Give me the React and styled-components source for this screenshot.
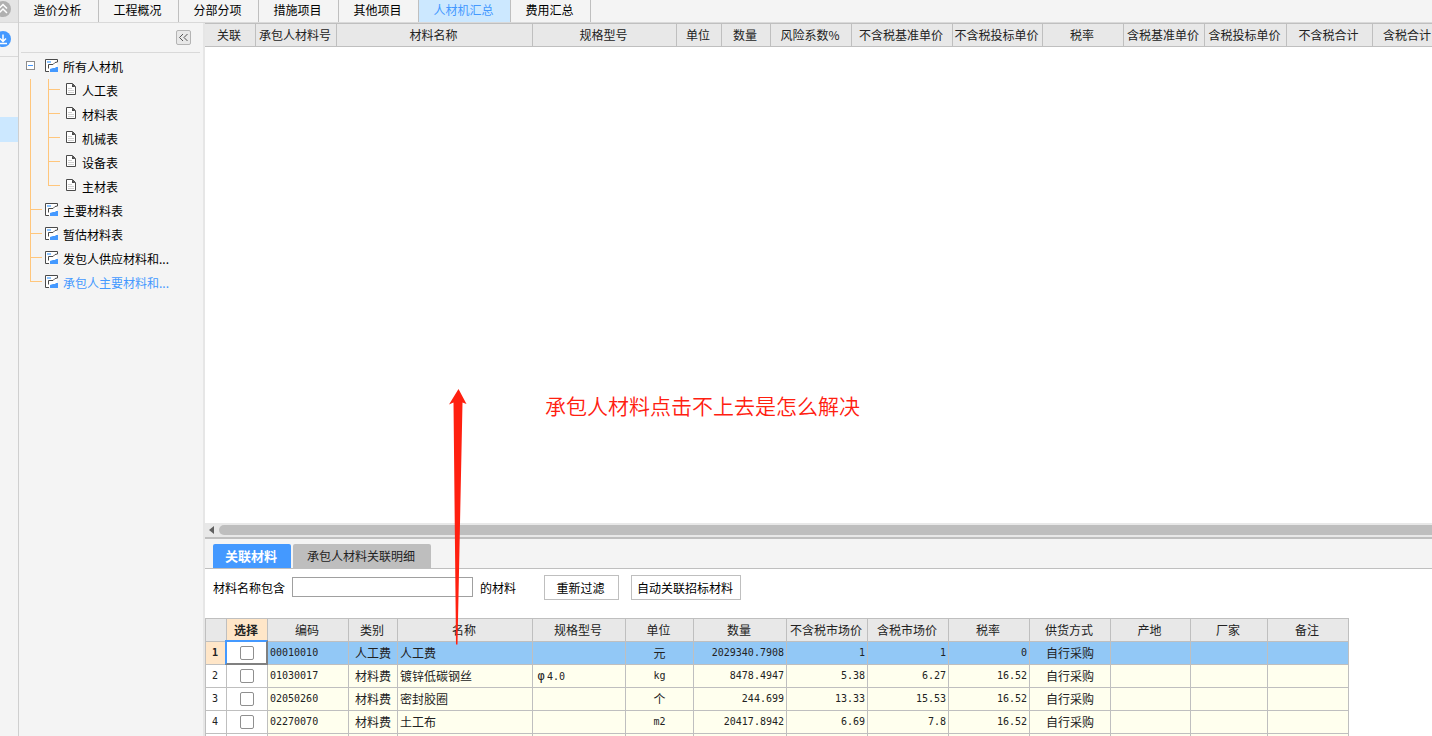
import React from 'react';
import styled, { createGlobalStyle } from 'styled-components';

const line = '#bfbfbf';
const softLine = '#d9d9d9';
const blue = '#4499ff';
const guide = '#ffc67c';

const GlobalStyle = createGlobalStyle`
  * { box-sizing: border-box; }
  body { margin: 0; background: #f4f4f4; color: #000; }
  body, button, input, table {
    font-family: "Noto Sans CJK SC", "Noto Sans", sans-serif;
    font-size: 12px;
    line-height: 16px;
  }
  button { padding: 0; margin: 0; border: 0; background: none; color: inherit; cursor: pointer; }
`;

const Page = styled.div`
  display: flex;
  height: 100vh;
  overflow: hidden;
`;

/* Left rail */
const Rail = styled.nav`
  flex: 0 0 19px;
  display: flex;
  flex-direction: column;
  border-right: 1px solid #cfcfcf;
  overflow: hidden;
`;
const RailButton = styled.button`
  display: flex;
  align-items: ${p => (p.$top ? 'flex-start' : 'center')};
  height: ${p => (p.$top ? 23 : 34)}px;
  background: ${p => (p.$top ? '#e4e4e4' : 'transparent')};
  border-bottom: 1px solid ${softLine};
  svg { display: block; flex: none; }
`;
const RailItem = styled.button`
  height: 25px;
  margin-top: 60px;
  background: #cce8ff;
`;

const Main = styled.div`
  flex: 1;
  min-width: 0;
  display: flex;
  flex-direction: column;
`;
const TopTabs = styled.nav`
  display: flex;
  flex: none;
  height: 23px;
  border-bottom: 1px solid ${softLine};
`;
const TopTab = styled.button`
  width: ${p => (p.$active ? 92 : 80)}px;
  padding: 0 2px 2px 0;
  border-right: 1px solid ${line};
  background: ${p => (p.$active ? '#cce8ff' : 'transparent')};
  color: ${p => (p.$active ? blue : '#000')};
`;
const Body = styled.div`
  flex: 1;
  min-height: 0;
  display: flex;
`;

/* Material tree */
const Sidebar = styled.aside`
  flex: 0 0 186px;
  border-right: 2px solid #e6e6e6;
`;
const SidebarHead = styled.div`
  display: flex;
  justify-content: flex-end;
  align-items: center;
  height: 30px;
  margin: 0 3px 2px 2px;
  padding-right: 9px;
  border-bottom: 1px solid ${softLine};
`;
const CollapseButton = styled.button`
  width: 15px;
  height: 15px;
  border: 1px solid #b4b4b4;
  border-radius: 2px;
  background: #e8e8e8;
  svg { display: block; }
`;
const Tree = styled.ul`
  list-style: none;
  margin: 0;
  padding: 0 0 0 11px;
`;
const TreeRow = styled.li`
  display: flex;
  align-items: center;
  height: 24px;
`;
const Guide = styled.span`
  flex: none;
  align-self: stretch;
  width: ${p => p.$width}px;
  background-image: linear-gradient(${guide}, ${guide}), linear-gradient(${guide}, ${guide});
  background-repeat: no-repeat;
  background-position: 0 0, 0 10px;
  background-size: 1px ${p => (p.$last ? '11px' : '100%')}, ${p => (p.$branch ? '12px' : '0')} 1px;
`;
const Toggle = styled.button`
  display: flex;
  align-items: center;
  justify-content: center;
  width: 9px;
  height: 9px;
  margin: 0 10px 3px -4px;
  border: 1px solid #8c8c8c;
  background: #fff;
  &::before { content: ''; width: 5px; height: 1px; background: ${blue}; }
`;
const TreeLink = styled.a`
  display: flex;
  align-items: center;
  gap: ${p => (p.$leaf ? 6 : 5)}px;
  color: ${p => (p.$active ? blue : '#000')};
  text-decoration: none;
  white-space: nowrap;
  svg { display: block; flex: none; margin-bottom: ${p => (p.$leaf ? 4 : 3)}px; }
`;

/* Right side */
const Workspace = styled.main`
  position: relative;
  flex: 1;
  min-width: 0;
  display: flex;
  flex-direction: column;
  overflow: hidden;
  background: #fff;
`;
const GridPane = styled.section`
  flex: 1;
  min-height: 0;
  overflow: hidden;
`;
const Table = styled.table`
  table-layout: fixed;
  width: 0;
  border-collapse: separate;
  border-spacing: 0;
  border-top: 1px solid ${line};
  border-left: ${p => (p.$leftEdge ? 1 : 0)}px solid ${line};
`;
const HeadCell = styled.th`
  height: 23px;
  padding: 0 2px 0 0;
  border-right: 1px solid ${line};
  border-bottom: 1px solid ${line};
  background: ${p => (p.$active ? '#ffe6c8' : '#e8e8e8')};
  color: #222;
  font-weight: ${p => (p.$active ? 700 : 400)};
  text-align: center;
  white-space: nowrap;
`;
const Cell = styled.td`
  height: 23px;
  padding: 0 2px;
  border-right: 1px solid ${line};
  border-bottom: 1px solid ${line};
  background: ${p => (p.$selected ? '#92c8f6' : '#ffffee')};
  color: #222;
  text-align: ${p => p.$align || 'left'};
  white-space: nowrap;
  font-family: ${p => (p.$mono ? '"DejaVu Sans Mono", "Noto Sans CJK SC", monospace' : 'inherit')};
  font-size: ${p => (p.$mono ? 10 : 12)}px;
`;
const Symbol = styled.span`
  display: inline-block;
  width: 12px;
  font-size: 12px;
  text-align: center;
`;
const RowHead = styled.th`
  padding: 0 2px 0 0;
  border-right: 1px solid ${line};
  border-bottom: 1px solid ${line};
  background: ${p => (p.$selected ? '#ffe6c8' : '#fff')};
  color: #222;
  font: ${p => (p.$selected ? 700 : 400)} 10px/16px "DejaVu Sans Mono", monospace;
`;
const CheckCell = styled.td`
  position: relative;
  padding: 0;
  border-right: 1px solid ${line};
  border-bottom: 1px solid ${line};
  background: #fff;
  &::after {
    content: '';
    display: ${p => (p.$selected ? 'block' : 'none')};
    position: absolute;
    inset: -2px -1px -1px -2px;
    border: 2px solid;
    border-color: ${blue} #808080 #808080 ${blue};
    pointer-events: none;
  }
`;
const Check = styled.input`
  appearance: none;
  display: block;
  width: 14px;
  height: 14px;
  margin: 0 auto;
  border: 1px solid #8f8f8f;
  border-radius: 2px;
  background: #fff;
  &:checked { background: ${blue}; }
`;
const ScrollTrack = styled.div`
  flex: none;
  display: flex;
  align-items: center;
  gap: 5px;
  height: 16px;
  padding-left: 4px;
  border-bottom: 2px solid ${line};
  background: #e8e8e8;
`;
const ScrollArrow = styled.button`
  width: 5px;
  svg { display: block; }
`;
const ScrollThumb = styled.div`
  flex: 1;
  height: 10px;
  border-radius: 5px 0 0 5px;
  background: #bebebe;
`;
const LinkPane = styled.section`
  flex: 0 0 197px;
  overflow: hidden;
`;
const PaneTabs = styled.div`
  display: flex;
  align-items: flex-end;
  gap: 2px;
  height: 30px;
  padding-left: 8px;
  border-bottom: 1px solid ${line};
  background: #f4f4f4;
`;
const PaneTab = styled.button`
  height: 24px;
  padding: ${p => (p.$active ? '0 14px 0 12px' : '0 16px 0 14px')};
  border-radius: 2px 2px 0 0;
  background: ${p => (p.$active ? blue : '#bebebe')};
  color: ${p => (p.$active ? '#fff' : '#222')};
  font-size: ${p => (p.$active ? 13 : 12)}px;
  font-weight: ${p => (p.$active ? 700 : 400)};
`;
const FilterBar = styled.form`
  display: flex;
  align-items: center;
  height: 25px;
  margin: 6px 0 18px;
  padding-left: 8px;
  white-space: nowrap;
`;
const FilterLabel = styled.label`
  display: flex;
  align-items: center;
  gap: 7px;
  margin-right: 28px;
`;
const FilterInput = styled.input`
  width: 181px;
  height: 20px;
  margin-bottom: 2px;
  border: 1px solid #a0a0a0;
  background: #fff;
`;
const FilterButton = styled.button`
  width: ${p => (p.$wide ? 110 : 75)}px;
  height: 25px;
  margin-right: 12px;
  padding: 0 2px 0 0;
  border: 1px solid ${line};
  background: #fff;
`;

/* Marks drawn over the window */
const Arrow = styled.svg`
  position: absolute;
  left: 243px;
  bottom: 91px;
  pointer-events: none;
`;
const Note = styled.p`
  position: absolute;
  left: 340px;
  bottom: 316px;
  margin: 0;
  color: #ff2010;
  font-size: 21px;
  line-height: 30px;
  font-weight: 350;
  white-space: nowrap;
`;

const ReportIcon = () => (
  <svg width="13" height="13" viewBox="0 0 13 13" aria-hidden="true">
    <rect x="1" y="1" width="11" height="11" fill="#fff" />
    <rect x="2" y="2" width="4" height="2" fill="#8cc4ff" />
    <path d="M5 13V10L8 9H10L11 8H13V13Z" fill={blue} />
    <path d="M4 12.500H0.500V0.500H12.500V3L10 3.500L8 5.500H3.500V9.500" fill="none" stroke="#4a4a4a" />
  </svg>
);
const PageIcon = () => (
  <svg width="10" height="12" viewBox="0 0 10 12" aria-hidden="true">
    <path d="M0.500 0.500H6.500L9.500 3.500V11.500H0.500Z" fill="#fff" stroke="#4a4a4a" />
    <path d="M6 0.500V4H9.500Z" fill="#4a4a4a" />
    <path d="M2 5.500H6M2 7.500H8M2 9.500H8" stroke="#d0d0d0" />
  </svg>
);

const topTabs = ['造价分析', '工程概况', '分部分项', '措施项目', '其他项目', '人材机汇总', '费用汇总'];
const leaves = ['人工表', '材料表', '机械表', '设备表', '主材表'];
const branches = ['主要材料表', '暂估材料表', '发包人供应材料和...', '承包人主要材料和...'];
const upperColumns = [
  ['关联', 51], ['承包人材料号', 81], ['材料名称', 196], ['规格型号', 144], ['单位', 45], ['数量', 49],
  ['风险系数%', 81], ['不含税基准单价', 101], ['不含税投标单价', 90], ['税率', 81], ['含税基准单价', 81],
  ['含税投标单价', 82], ['不含税合计', 86], ['含税合计', 71],
];
const lowerColumns = [
  ['', 21], ['选择', 41], ['编码', 81], ['类别', 49], ['名称', 135], ['规格型号', 93], ['单位', 68], ['数量', 93],
  ['不含税市场价', 81], ['含税市场价', 81], ['税率', 81], ['供货方式', 81], ['产地', 80], ['厂家', 77], ['备注', 81],
];
const aligns = ['left', 'center', 'left', 'left', 'center', 'right', 'right', 'right', 'right', 'center', 'left', 'left', 'left'];
const rows = [
  ['00010010', '人工费', '人工费', '', '元', '2029340.7908', '1', '1', '0', '自行采购', '', '', ''],
  ['01030017', '材料费', '镀锌低碳钢丝', 'φ4.0', 'kg', '8478.4947', '5.38', '6.27', '16.52', '自行采购', '', '', ''],
  ['02050260', '材料费', '密封胶圈', '', '个', '244.699', '13.33', '15.53', '16.52', '自行采购', '', '', ''],
  ['02270070', '材料费', '土工布', '', 'm2', '20417.8942', '6.69', '7.8', '16.52', '自行采购', '', '', ''],
  ['', '', '', '', '', '', '', '', '', '', '', '', ''],
];
const isLatin = text => /^[\x20-\x7eφ]+$/.test(text);

function Columns({ items }) {
  return (
    <colgroup>
      {items.map(([name, width]) => <col key={name} width={width} />)}
    </colgroup>
  );
}

function MaterialTree() {
  return (
    <Tree>
      <TreeRow>
        <Toggle aria-label="折叠" />
        <TreeLink href="#all"><ReportIcon />所有人材机</TreeLink>
      </TreeRow>
      {leaves.map((name, i) => (
        <TreeRow key={name}>
          <Guide $width={18} />
          <Guide $width={18} $branch $last={i === leaves.length - 1} />
          <TreeLink href="#leaf" $leaf><PageIcon />{name}</TreeLink>
        </TreeRow>
      ))}
      {branches.map((name, i) => (
        <TreeRow key={name}>
          <Guide $width={15} $branch $last={i === branches.length - 1} />
          <TreeLink href="#branch" $active={i === branches.length - 1}><ReportIcon />{name}</TreeLink>
        </TreeRow>
      ))}
    </Tree>
  );
}

function LinkedMaterials() {
  return (
    <Table $leftEdge>
      <Columns items={lowerColumns} />
      <thead>
        <tr>
          {lowerColumns.map(([name]) => <HeadCell key={name} $active={name === '选择'}>{name}</HeadCell>)}
        </tr>
      </thead>
      <tbody>
        {rows.map((row, r) => (
          <tr key={r}>
            <RowHead $selected={r === 0}>{row[0] && r + 1}</RowHead>
            <CheckCell $selected={r === 0}>
              {row[0] && <Check type="checkbox" aria-label={`选择 ${r + 1}`} />}
            </CheckCell>
            {row.map((text, c) => (
              <Cell key={c} $selected={r === 0} $align={aligns[c]} $mono={isLatin(text)}>
                {text.startsWith('φ') ? <><Symbol>φ</Symbol>{text.slice(1)}</> : text}
              </Cell>
            ))}
          </tr>
        ))}
      </tbody>
    </Table>
  );
}

export default function App() {
  return (
    <Page>
      <GlobalStyle />
      <Rail>
        <RailButton $top aria-label="收起">
          <svg width="12" height="18" viewBox="0 0 12 18">
            <circle cx="3" cy="9" r="8" fill="#b0b0b0" />
            <path d="M-1 8.500L3 4.500L7 8.500M-1 13L3 9L7 13" fill="none" stroke="#fff" strokeWidth="1.500" />
          </svg>
        </RailButton>
        <RailButton aria-label="下载">
          <svg width="12" height="18" viewBox="0 0 12 18">
            <circle cx="3" cy="8" r="8" fill={blue} />
            <path d="M3 3.500V10M0 7.500L3 10.500L6 7.500M-1 12.500H7" fill="none" stroke="#fff" strokeWidth="1.500" />
          </svg>
        </RailButton>
        <RailItem aria-label="当前项" />
      </Rail>
      <Main>
        <TopTabs>
          {topTabs.map(name => <TopTab key={name} $active={name === '人材机汇总'}>{name}</TopTab>)}
        </TopTabs>
        <Body>
          <Sidebar>
            <SidebarHead>
              <CollapseButton aria-label="收起侧栏">
                <svg width="13" height="13" viewBox="0 0 13 13">
                  <path d="M6 3L2.500 6.500L6 10M10.500 3L7 6.500L10.500 10" fill="none" stroke="#555" />
                </svg>
              </CollapseButton>
            </SidebarHead>
            <MaterialTree />
          </Sidebar>
          <Workspace>
            <GridPane>
              <Table>
                <Columns items={upperColumns} />
                <thead>
                  <tr>{upperColumns.map(([name]) => <HeadCell key={name}>{name}</HeadCell>)}</tr>
                </thead>
              </Table>
            </GridPane>
            <ScrollTrack>
              <ScrollArrow aria-label="向左滚动">
                <svg width="5" height="8" viewBox="0 0 5 8"><path d="M5 0V8L0 4Z" fill="#606060" /></svg>
              </ScrollArrow>
              <ScrollThumb />
            </ScrollTrack>
            <LinkPane>
              <PaneTabs>
                <PaneTab $active>关联材料</PaneTab>
                <PaneTab>承包人材料关联明细</PaneTab>
              </PaneTabs>
              <FilterBar onSubmit={e => e.preventDefault()}>
                <FilterLabel>材料名称包含<FilterInput type="text" />的材料</FilterLabel>
                <FilterButton type="submit">重新过滤</FilterButton>
                <FilterButton type="button" $wide>自动关联招标材料</FilterButton>
              </FilterBar>
              <LinkedMaterials />
            </LinkPane>
            <Arrow width="20" height="256" viewBox="0 0 20 256" aria-hidden="true">
              <path d="M10.500 0L18.500 15L14.500 13.500L9.500 255.500H8L5.500 13.500L1 15.500Z" fill="#ff2010" />
            </Arrow>
            <Note>承包人材料点击不上去是怎么解决</Note>
          </Workspace>
        </Body>
      </Main>
    </Page>
  );
}
